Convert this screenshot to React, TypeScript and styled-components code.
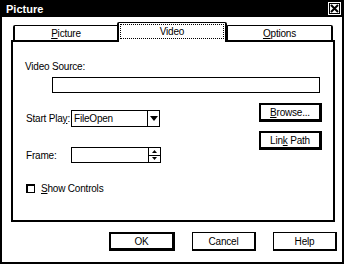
import styled, { createGlobalStyle } from "styled-components";

const GlobalStyle = createGlobalStyle`
  html, body {
    margin: 0;
    padding: 0;
    background: #fff;
  }
  * {
    box-sizing: border-box;
  }
`;

const Window = styled.div`
  width: 344px;
  height: 264px;
  border: 2px solid #000;
  border-top: none;
  background: #fff;
  display: flex;
  flex-direction: column;
  font-family: "Liberation Sans", Arial, sans-serif;
  font-size: 10px;
  letter-spacing: -0.2px;
  color: #000;
`;

const TitleBar = styled.div`
  height: 17px;
  background: #000;
  display: flex;
  align-items: center;
  justify-content: space-between;
  padding: 0 1px 0 4px;
`;

const Title = styled.span`
  color: #fff;
  font-weight: 700;
  font-size: 11px;
  letter-spacing: 0;
`;

const CloseButton = styled.button`
  width: 13px;
  height: 13px;
  padding: 0;
  border: none;
  background: transparent;
  display: flex;
`;

const Body = styled.div`
  padding: 5px 7px 0 9px;
  display: flex;
  flex-direction: column;
`;

const TabRow = styled.div`
  height: 18px;
  display: flex;
  align-items: flex-end;
  padding-left: 2px;
`;

const Tab = styled.div<{ $active?: boolean; $width: number }>`
  width: ${(p) => p.$width}px;
  height: ${(p) => (p.$active ? 20 : 15)}px;
  margin-bottom: ${(p) => (p.$active ? -2 : 0)}px;
  margin-left: ${(p) => (p.$active ? -2 : 0)}px;
  margin-right: ${(p) => (p.$active ? -1 : 0)}px;
  position: relative;
  z-index: ${(p) => (p.$active ? 1 : 0)};
  background: #fff;
  border: 2px solid #000;
  border-top-width: 1px;
  border-bottom: none;
  border-radius: 2px 2px 0 0;
  display: flex;
  align-items: ${(p) => (p.$active ? "stretch" : "center")};
  justify-content: center;
  padding: ${(p) => (p.$active ? "1px 1px 3px" : "0")};
`;

const FocusRect = styled.div`
  flex: 1;
  border: 1px dotted #000;
  display: flex;
  align-items: center;
  justify-content: center;
`;

const Panel = styled.div`
  height: 182px;
  border: 2px solid #000;
  padding: 18px 11px 0 12px;
  display: flex;
  flex-direction: column;
`;

const Label = styled.span<{ $width?: number }>`
  display: inline-block;
  line-height: 13px;
  width: ${(p) => (p.$width ? `${p.$width}px` : "auto")};
  white-space: nowrap;
`;

const TextBox = styled.div`
  margin: 4px 0 0 27px;
  width: 268px;
  height: 16px;
  border: 1px solid #000;
`;

const Middle = styled.div`
  margin-top: 10px;
  display: flex;
  justify-content: space-between;
`;

const LeftColumn = styled.div`
  padding-top: 7px;
  padding-left: 1px;
  display: flex;
  flex-direction: column;
`;

const RightColumn = styled.div`
  display: flex;
  flex-direction: column;
  gap: 9px;
`;

const FieldRow = styled.div<{ $gap?: number }>`
  display: flex;
  align-items: center;
  margin-top: ${(p) => p.$gap ?? 0}px;
`;

const Combo = styled.div`
  width: 89px;
  height: 17px;
  border: 1px solid #000;
  display: flex;
  align-items: stretch;
`;

const ComboText = styled.span`
  flex: 1;
  padding-left: 2px;
  line-height: 15px;
`;

const DropButton = styled.div`
  width: 12px;
  border-left: 1px solid #000;
  display: flex;
  align-items: center;
  justify-content: center;
`;

const Spin = styled.div`
  width: 90px;
  height: 16px;
  border: 1px solid #000;
  display: flex;
`;

const SpinField = styled.div`
  flex: 1;
`;

const SpinButtons = styled.div`
  width: 12px;
  border-left: 1px solid #000;
  display: flex;
  flex-direction: column;
`;

const SpinHalf = styled.div<{ $top?: boolean }>`
  flex: 1;
  display: flex;
  align-items: center;
  justify-content: center;
  border-bottom: ${(p) => (p.$top ? "1px solid #000" : "none")};
`;

const CheckRow = styled.div`
  margin-top: 19px;
  display: flex;
  align-items: center;
  gap: 6px;
`;

const CheckBox = styled.div`
  width: 9px;
  height: 9px;
  border: 1px solid #000;
  border-left-width: 2px;
  border-top-width: 2px;
`;

const SideButton = styled.button`
  width: 63px;
  height: 19px;
  padding: 0;
  background: #fff;
  border: 2px solid #000;
  border-right-width: 3px;
  border-bottom-width: 3px;
  font: inherit;
  letter-spacing: inherit;
  color: #000;
`;

const ButtonRow = styled.div`
  margin-top: 10px;
  display: flex;
  justify-content: flex-end;
  gap: 17px;
  margin-right: -2px;
`;

const DialogButton = styled.button<{ $default?: boolean }>`
  width: ${(p) => (p.$default ? 66 : 64)}px;
  height: 19px;
  padding: 0;
  background: #fff;
  border: ${(p) => (p.$default ? 2 : 1)}px solid #000;
  border-right-width: ${(p) => (p.$default ? 3 : 2)}px;
  border-bottom-width: ${(p) => (p.$default ? 3 : 2)}px;
  font: inherit;
  letter-spacing: inherit;
  color: #000;
`;

const U = styled.span`
  text-decoration: underline;
`;

const App = () => {
  return (
    <>
      <GlobalStyle />
      <Window>
        <TitleBar>
          <Title>Picture</Title>
          <CloseButton aria-label="Close">
            <svg width="13" height="13" viewBox="0 0 13 13">
              <rect x="0" y="0" width="13" height="13" fill="#fff" />
              <rect x="1.5" y="1.5" width="10" height="10" fill="none" stroke="#000" />
              <path d="M3 3 L10 10 M10 3 L3 10" stroke="#000" strokeWidth="2" />
            </svg>
          </CloseButton>
        </TitleBar>
        <Body>
          <TabRow>
            <Tab $width={106}>
              <span>
                <U>P</U>icture
              </span>
            </Tab>
            <Tab $width={110} $active>
              <FocusRect>Video</FocusRect>
            </Tab>
            <Tab $width={107}>
              <span>
                <U>O</U>ptions
              </span>
            </Tab>
          </TabRow>
          <Panel>
            <Label>Video Source:</Label>
            <TextBox />
            <Middle>
              <LeftColumn>
                <FieldRow>
                  <Label $width={45}>
                    Start Pla<U>y</U>:
                  </Label>
                  <Combo>
                    <ComboText>FileOpen</ComboText>
                    <DropButton>
                      <svg width="8" height="6" viewBox="0 0 8 6">
                        <path d="M0 0 H8 L4 5 Z" fill="#000" />
                      </svg>
                    </DropButton>
                  </Combo>
                </FieldRow>
                <FieldRow $gap={20}>
                  <Label $width={45}>Frame:</Label>
                  <Spin>
                    <SpinField />
                    <SpinButtons>
                      <SpinHalf $top>
                        <svg width="5" height="3" viewBox="0 0 5 3">
                          <path d="M0 3 H5 L2.5 0 Z" fill="#000" />
                        </svg>
                      </SpinHalf>
                      <SpinHalf>
                        <svg width="5" height="3" viewBox="0 0 5 3">
                          <path d="M0 0 H5 L2.5 3 Z" fill="#000" />
                        </svg>
                      </SpinHalf>
                    </SpinButtons>
                  </Spin>
                </FieldRow>
                <CheckRow>
                  <CheckBox />
                  <Label>
                    <U>S</U>how Controls
                  </Label>
                </CheckRow>
              </LeftColumn>
              <RightColumn>
                <SideButton>
                  <U>B</U>rowse...
                </SideButton>
                <SideButton>
                  Lin<U>k</U> Path
                </SideButton>
              </RightColumn>
            </Middle>
          </Panel>
          <ButtonRow>
            <DialogButton $default>OK</DialogButton>
            <DialogButton>Cancel</DialogButton>
            <DialogButton>Help</DialogButton>
          </ButtonRow>
        </Body>
      </Window>
    </>
  );
};

export default App;
